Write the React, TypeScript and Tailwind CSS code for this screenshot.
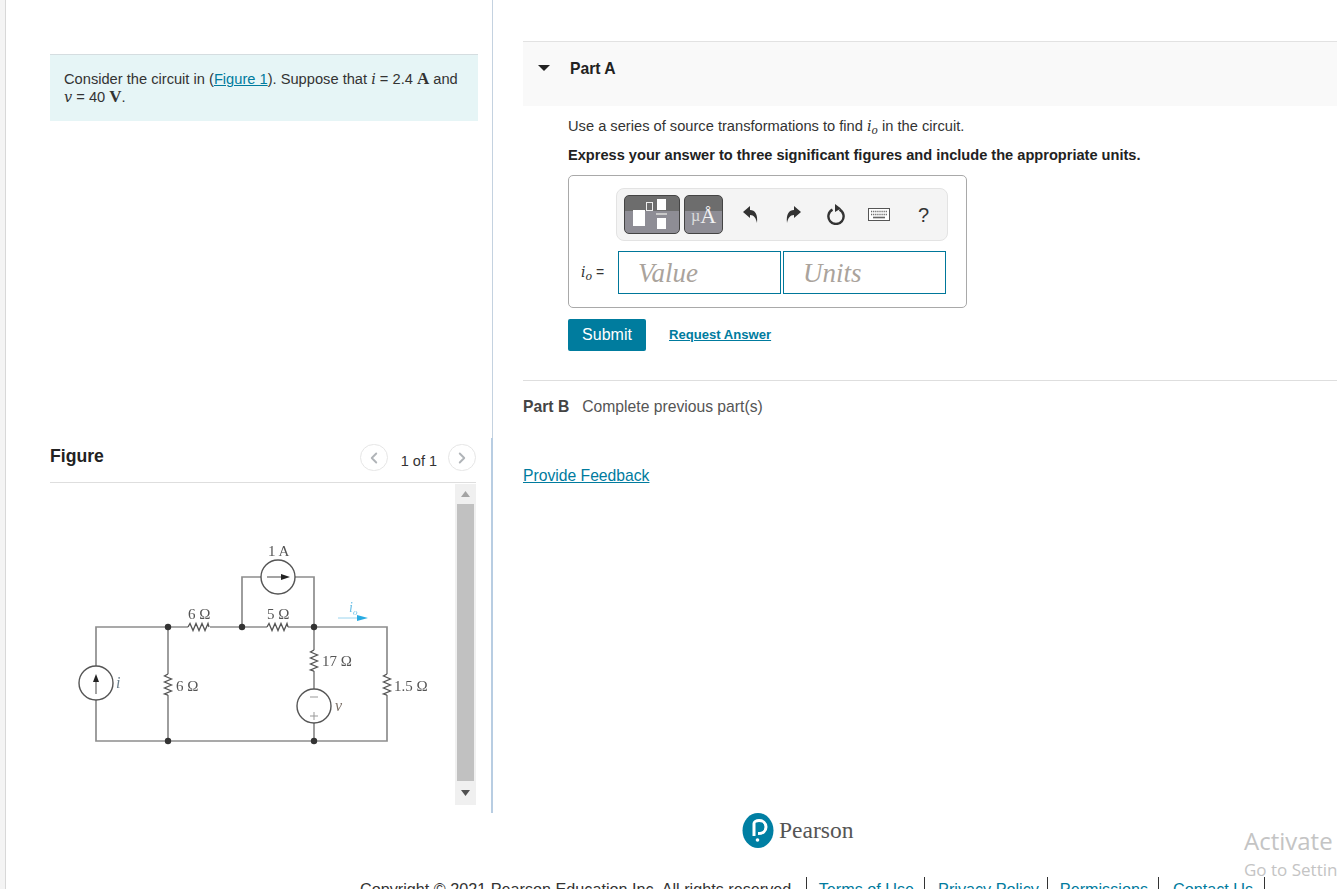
import { ChevronLeft, ChevronRight } from "lucide-react";

const sans = "font-['Liberation_Sans',Arial,sans-serif]";
const serif = "font-['Liberation_Serif','Times_New_Roman',serif]";
const math = "font-['DejaVu_Serif',serif] italic";

function Zigzag({ x, y, vertical }: { x: number; y: number; vertical?: boolean }) {
    // resistor, 21px long, starts at x,y
    const steps = [0, 2, 5, 8, 11, 14, 17, 20, 21];
    const pts = steps
        .map((s, i) => {
            const off = i === 0 || i === steps.length - 1 ? 0 : i % 2 ? -3.5 : 3.5;
            return vertical ? `${x + off},${y + s}` : `${x + s},${y + off}`;
        })
        .join(" ");
    return <polyline points={pts} fill="none" stroke="#555" strokeWidth="1.3" />;
}

function Circuit() {
    // drawn in page coordinates, viewBox origin is the figure box origin
    const wire = "#8d8d8d";
    const label = { fontFamily: "'Liberation Serif', serif", fontSize: 15, fill: "#555" };
    return (
        <svg width="405" height="320" viewBox="50 484 405 320" className="block blur-[0.4px]">
            <g fill="none" stroke={wire} strokeWidth="1.7">
                <path d="M96 666V627H188M210 627H267M288 627H387V674M387 695V741H96V700" />
                <path d="M168 627V674M168 695V741" />
                <path d="M242 627V577H261M295 577H314V627" />
                <path d="M314 627V650M314 671V689M314 723V741" />
            </g>
            <g fill="#fff" stroke="#555" strokeWidth="1.4">
                <circle cx="96" cy="683" r="17" />
                <circle cx="278" cy="577" r="17" />
                <circle cx="314" cy="706" r="17" />
            </g>
            <Zigzag x={188} y={627} />
            <Zigzag x={267} y={627} />
            <Zigzag x={168} y={674} vertical />
            <Zigzag x={314} y={650} vertical />
            <Zigzag x={387} y={674} vertical />
            <g fill="#333">
                <circle cx="168" cy="627" r="3.2" />
                <circle cx="242" cy="627" r="3.2" />
                <circle cx="314" cy="627" r="3.2" />
                <circle cx="168" cy="741" r="3.2" />
                <circle cx="314" cy="741" r="3.2" />
            </g>
            <path d="M96 694V679" stroke="#666" strokeWidth="1.2" />
            <path d="M96 674L93 682H99Z" fill="#222" />
            <path d="M267 577H281" stroke="#666" strokeWidth="1.2" />
            <path d="M290 577L281 574V580Z" fill="#222" />
            <path d="M310 697H318M310 716H318M314 712V720" stroke="#999" strokeWidth="1" />
            <path d="M338 618H360" stroke="#9ad4ee" strokeWidth="1" />
            <path d="M368 618L357 615V621Z" fill="#29abe2" />
            <text x="188" y="619" {...label}>6 Ω</text>
            <text x="267" y="619" {...label}>5 Ω</text>
            <text x="268" y="556" {...label}>1 A</text>
            <text x="176" y="691" {...label}>6 Ω</text>
            <text x="322" y="666" {...label}>17 Ω</text>
            <text x="394" y="691" {...label}>1.5 Ω</text>
            <text x="116" y="688" {...label} fontSize={16} fontStyle="italic" fill="#6b7f8c">i</text>
            <text x="335" y="711" {...label} fontSize={16} fontStyle="italic" fill="#7a6f66">v</text>
            <text x="349" y="612" {...label} fontSize={14} fontStyle="italic" fill="#6bbfe6">i</text>
            <text x="353" y="615" {...label} fontSize={9} fontStyle="italic" fill="#6bbfe6">o</text>
        </svg>
    );
}

function Scrollbar() {
    return (
        <div className="flex h-[321px] w-[21px] flex-col items-center bg-[#f0f0f0]">
            <div className="flex h-[20px] items-center justify-center">
                <svg width="9" height="6" viewBox="0 0 9 6"><path d="M4.5 0L9 6H0Z" fill="#a3a3a3" /></svg>
            </div>
            <div className="h-[277px] w-[17px] bg-[#c1c1c1]" />
            <div className="flex h-[24px] items-center justify-center">
                <svg width="9" height="6" viewBox="0 0 9 6"><path d="M0 0H9L4.5 6Z" fill="#505050" /></svg>
            </div>
        </div>
    );
}

function TemplateIcon() {
    return (
        <div className="relative h-[39px] w-[56px] overflow-hidden rounded-[5px] border border-[#444] bg-[linear-gradient(#6d6d6d_0,#6d6d6d_41%,#8e8d95_41%,#8e8d95_100%)]">
            <div className="absolute left-[8px] top-[14px] h-[16px] w-[12px] bg-white" />
            <div className="absolute left-[21px] top-[6px] h-[9px] w-[7px] border border-[#eee]" />
            <div className="absolute left-[32px] top-[3px] h-[11px] w-[9px] bg-white" />
            <div className="absolute left-[31px] top-[17px] h-[2px] w-[11px] bg-[#c9c9c9]" />
            <div className="absolute left-[32px] top-[22px] h-[11px] w-[9px] bg-white" />
        </div>
    );
}

function UnitIcon() {
    return (
        <div className={`flex h-[39px] w-[39px] items-end justify-center overflow-hidden rounded-[5px] border border-[#444] bg-[linear-gradient(#6d6d6d_0,#6d6d6d_41%,#8e8d95_41%,#8e8d95_100%)] pb-[7px] leading-[20px] text-[#f2f2f2] ${serif}`}>
            <span className="text-[16px] text-[#dcdcdc]">µ</span>
            <span className="text-[22px]">Å</span>
        </div>
    );
}

function ToolIcons() {
    return (
        <div className="ml-[20px] flex items-center text-[#333]">
            <svg width="15" height="17" viewBox="0 0 15 17" className="mr-[28px]">
                <path d="M0 6L7 0V4C12 4 15 8 14 17C13 12 11 9 7 9V12Z" fill="#333" />
            </svg>
            <svg width="15" height="17" viewBox="0 0 15 17" className="mr-[26px]">
                <path d="M15 6L8 0V4C3 4 0 8 1 17C2 12 4 9 8 9V12Z" fill="#333" />
            </svg>
            <svg width="18" height="21" viewBox="0 0 18 21" className="mr-[23px]">
                <path d="M5.5 5.6A7.6 7.6 0 1 0 12.5 5.6" fill="none" stroke="#333" strokeWidth="2.4" />
                <path d="M8 0L14 4.5L8 8Z" fill="#333" />
            </svg>
            <svg width="22" height="13" viewBox="0 0 22 13" className="mr-[28px]">
                <rect x="0.5" y="0.5" width="21" height="12" fill="#fff" stroke="#555" />
                <path d="M3 3.5H19M3 6.5H19" stroke="#666" strokeWidth="1.6" strokeDasharray="1.2 0.9" />
                <path d="M5 9.5H17" stroke="#666" strokeWidth="1.6" />
            </svg>
            <span className={`text-[20px] leading-none ${sans}`}>?</span>
        </div>
    );
}

function AnswerBox() {
    return (
        <div className="h-[133px] w-[399px] rounded-[5px] border border-[#a9a9a9] pl-[47px] pt-[12px]">
            <div className="flex h-[53px] w-[332px] items-center rounded-[8px] border border-[#e3e3e3] bg-[#f4f4f4] pl-[7px]">
                <TemplateIcon />
                <div className="ml-[4px]"><UnitIcon /></div>
                <ToolIcons />
            </div>
            <div className="relative mt-[10px] flex gap-[2px] pl-[2px]">
                <span className={`absolute left-[-35px] top-[11px] text-[14px] text-[#333] ${sans}`}>
                    <span className={`text-[14px] ${math}`}>i</span>
                    <sub className={`text-[11px] ${math}`}>o</sub>
                    <span className="ml-[4px]">=</span>
                </span>
                <div className={`flex h-[43px] w-[163px] items-center border border-[#00779a] pl-[19px] pt-[2px] text-[27px] italic text-[#aaa39c] ${serif}`}>Value</div>
                <div className={`flex h-[43px] w-[163px] items-center border border-[#00779a] pl-[19px] pt-[2px] text-[27px] italic text-[#aaa39c] ${serif}`}>Units</div>
            </div>
        </div>
    );
}

export default function App() {
    return (
        <div className={`relative flex h-[889px] w-full overflow-hidden bg-white text-[14.67px] text-[#333] ${sans}`}>
            <div className="h-full w-[6px] shrink-0 border-r border-[#d8d8d8] bg-[#f4f4f4]" />

            <div className="flex min-w-0 flex-1 flex-col">
                <div className="flex h-[813px] shrink-0">
                    {/* left column */}
                    <div className="flex w-[485px] shrink-0 flex-col pl-[44px] pt-[54px]">
                        <div className="h-[67px] w-[428px] border-t border-[#d5dde0] bg-[#e6f5f6] px-[14px] pt-[15px] leading-[18px]">
                            Consider the circuit in (<a className="text-[#007b9e] underline">Figure 1</a>). Suppose that{" "}
                            <i className={`text-[14.5px] ${math}`}>i</i> = 2.4 <b className={`text-[17px] ${serif}`}>A</b> and
                            <br />
                            <i className={`text-[14.5px] ${math}`}>v</i> = 40 <b className={`text-[17px] ${serif}`}>V</b>.
                        </div>

                        <div className="mt-[316px] flex h-[46px] w-[426px] items-center border-b border-[#dedede] pb-[4px]">
                            <span className="mb-[3px] text-[17.6px] font-bold leading-[18px] text-[#222]">Figure</span>
                            <div className="ml-auto flex items-center">
                                <div className="flex h-[27px] w-[28px] items-center justify-center rounded-full border border-[#e6e6e6] text-[#b0b4b8]">
                                    <ChevronLeft size={18} strokeWidth={2.5} />
                                </div>
                                <span className="ml-[13px] mr-[11px] mt-[8px] text-[14.5px]">1 of 1</span>
                                <div className="flex h-[27px] w-[28px] items-center justify-center rounded-full border border-[#e6e6e6] text-[#b0b4b8]">
                                    <ChevronRight size={18} strokeWidth={2.5} />
                                </div>
                            </div>
                        </div>

                        <div className="mt-[1px] flex w-[426px] justify-between">
                            <Circuit />
                            <Scrollbar />
                        </div>
                    </div>

                    <div className="flex w-[2px] shrink-0 flex-col">
                        <div className="ml-[1px] h-[438px] w-[1px] bg-[#c4d2e0]" />
                        <div className="w-[2px] flex-1 bg-[#b8cde2]" />
                    </div>

                    {/* right column */}
                    <div className="min-w-0 flex-1 pl-[30px] pt-[41px]">
                        <div className="flex h-[65px] items-start border-t border-[#e2e2e2] bg-[#f9f9f9] pt-[18px]">
                            <svg width="12" height="6" viewBox="0 0 12 6" className="ml-[15px] mt-[5px]"><path d="M0 0H12L6 6Z" fill="#222" /></svg>
                            <span className="ml-[20px] text-[15.7px] font-bold leading-[18px] text-[#222]">Part A</span>
                        </div>
                        <div className="pl-[45px]">
                            <p className="mt-[11px] leading-[18px]">
                                Use a series of source transformations to find{" "}
                                <i className={`text-[14.5px] ${math}`}>i<sub className="text-[10.5px]">o</sub></i> in the circuit.
                            </p>
                            <p className="mt-[11px] text-[14.6px] font-bold leading-[18px] text-[#222]">
                                Express your answer to three significant figures and include the appropriate units.
                            </p>
                            <div className="mt-[11px]"><AnswerBox /></div>
                            <div className="mt-[11px] flex items-center">
                                <div className="flex h-[32px] w-[78px] items-center justify-center rounded-[2px] bg-[#007c9e] text-[16px] text-white">Submit</div>
                                <a className="ml-[23px] text-[13.1px] font-bold text-[#007b9e] underline">Request Answer</a>
                            </div>
                        </div>
                        <div className="mt-[29px] border-t border-[#dedede] pt-[17px] text-[15.7px] leading-[18px]">
                            <b className="text-[#444]">Part B</b>
                            <span className="ml-[13px] text-[#555]">Complete previous part(s)</span>
                        </div>
                        <a className="mt-[51px] block text-[15.7px] leading-[18px] text-[#007b9e] underline">Provide Feedback</a>
                    </div>
                </div>

                {/* footer */}
                <div className="flex h-[70px] items-start pl-[736px]">
                    <svg width="32" height="35" viewBox="0 0 32 35">
                        <ellipse cx="16" cy="17.5" rx="15.5" ry="17.5" fill="#007fa3" />
                        <path d="M12 23V10.5C12 9 14 7.5 17 7.5C21 7.5 24 10 24 14C24 18 21 20.5 16 20.5" fill="none" stroke="#fff" strokeWidth="3" />
                        <circle cx="15.5" cy="27" r="1.8" fill="#fff" />
                    </svg>
                    <span className={`ml-[5px] mt-[2px] text-[23.5px] leading-[30px] text-[#555] ${serif}`}>Pearson</span>
                </div>
            </div>

            {/* cut off by the bottom of the window */}
            <div className="absolute left-[360px] top-[877px] flex whitespace-nowrap text-[16.2px] text-[#333]">
                <span>Copyright © 2021 Pearson Education Inc. All rights reserved.</span>
                <span className="ml-[10px] mr-[12px] border-l border-[#333]" />
                <a className="text-[#007b9e]">Terms of Use</a>
                <span className="ml-[10px] mr-[13px] border-l border-[#333]" />
                <a className="text-[#007b9e]">Privacy Policy</a>
                <span className="ml-[8px] mr-[12px] border-l border-[#333]" />
                <a className="text-[#007b9e]">Permissions</a>
                <span className="ml-[10px] mr-[14px] border-l border-[#333]" />
                <a className="text-[#007b9e]">Contact Us</a>
                <span className="ml-[11px] border-l border-[#333]" />
            </div>

            {/* windows watermark */}
            <div className="absolute left-[1244px] top-[826px] whitespace-nowrap font-['Open_Sans',sans-serif] text-[#c4c4c4]">
                <div className="text-[24px] leading-[30px]">Activate Windows</div>
                <div className="mt-[3px] text-[17px] leading-[22px]">Go to Settings to activate Windows.</div>
            </div>
        </div>
    );
}
